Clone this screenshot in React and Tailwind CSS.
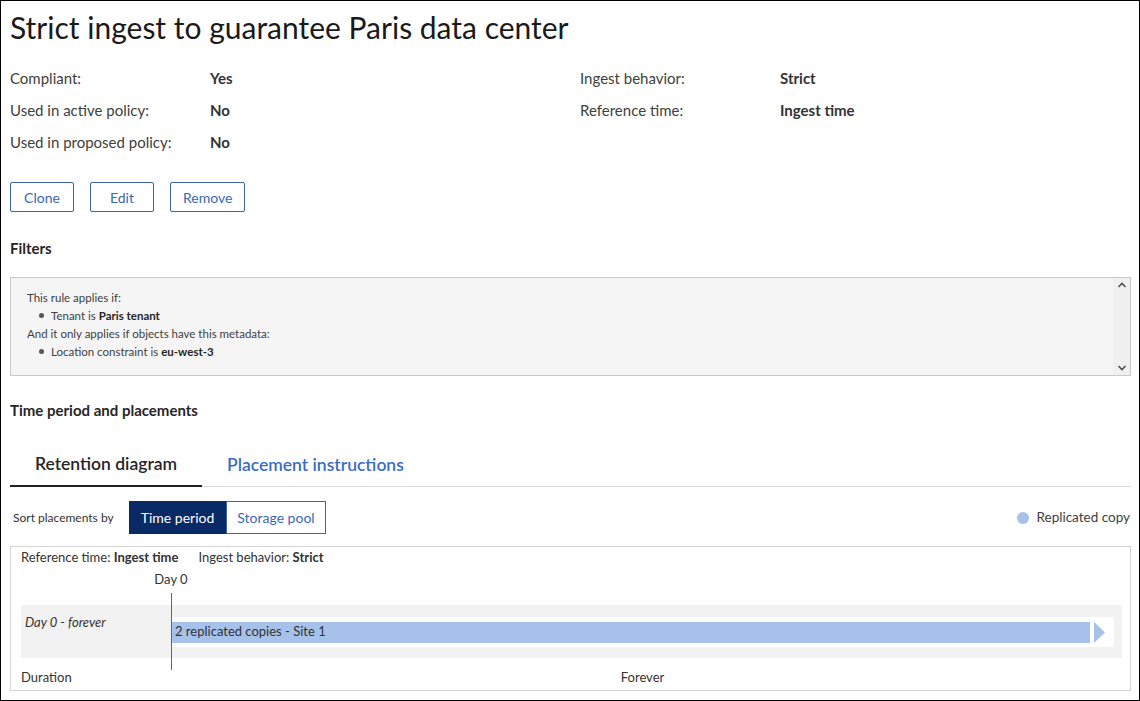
import React from "react";

const font = { fontFamily: "Lato, 'Open Sans', sans-serif" };

function InfoRow({ label, value }) {
  return (
    <div className="flex h-[32px] items-center">
      <div className="w-[200px] text-[15px] text-[#404040]">{label}</div>
      <div className="text-[15px] font-bold text-[#333]">{value}</div>
    </div>
  );
}

export default function App() {
  return (
    <div
      className="w-[1140px] h-[701px] border border-black bg-white text-[#333] overflow-hidden box-border"
      style={font}
    >
      <div className="pl-[9px] pr-[8px]">
        <h1 className="mt-[6px] h-[40px] text-[30px] leading-[40px] text-[#1a1a1a]">
          Strict ingest to guarantee Paris data center
        </h1>
        <div className="mt-[15px] flex">
          <div className="w-[570px]">
            <InfoRow label="Compliant:" value="Yes" />
            <InfoRow label="Used in active policy:" value="No" />
            <InfoRow label="Used in proposed policy:" value="No" />
          </div>
          <div>
            <InfoRow label="Ingest behavior:" value="Strict" />
            <InfoRow label="Reference time:" value="Ingest time" />
          </div>
        </div>
        <div className="mt-[24px] flex gap-[16px]">
          {["Clone", "Edit", "Remove"].map((b) => (
            <button
              key={b}
              className="h-[30px] min-w-[64px] px-[12px] border border-[#3d63a8] rounded-[2px] text-[14px] text-[#3b67b5] bg-white"
            >
              {b}
            </button>
          ))}
        </div>
        <div className="mt-[25px] text-[15px] font-bold text-[#262626]">Filters</div>
        <div className="mt-[17px] h-[99px] border border-[#c8c8c8] bg-[#f5f5f5] flex">
          <div className="flex-1 pl-[16px] pt-[11px] text-[11.5px] leading-[18px] text-[#404040]">
            <div>This rule applies if:</div>
            <div className="flex items-center pl-[12px]">
              <span className="w-[5px] h-[5px] rounded-full bg-[#555] mr-[7px]"></span>
              Tenant is&nbsp;<b className="text-[#262626]">Paris tenant</b>
            </div>
            <div>And it only applies if objects have this metadata:</div>
            <div className="flex items-center pl-[12px]">
              <span className="w-[5px] h-[5px] rounded-full bg-[#555] mr-[7px]"></span>
              Location constraint is&nbsp;<b className="text-[#262626]">eu-west-3</b>
            </div>
          </div>
          <div className="w-[17px] bg-[#f0f0f0] flex flex-col justify-between items-center py-[3px] text-[#555]">
            <svg width="10" height="8" viewBox="0 0 10 8"><path d="M1.5 6 L5 2.5 L8.5 6" fill="none" stroke="#505050" strokeWidth="1.6" /></svg>
            <svg width="10" height="8" viewBox="0 0 10 8"><path d="M1.5 2 L5 5.5 L8.5 2" fill="none" stroke="#505050" strokeWidth="1.6" /></svg>
          </div>
        </div>
        <div className="mt-[23px] text-[15px] font-bold text-[#262626]">Time period and placements</div>
        <div className="mt-[20px] flex border-b border-[#d9d9d9] h-[46px]">
          <div className="w-[192px] border-b-2 border-[#222] -mb-[1px] flex items-center justify-center text-[17.5px] font-semibold text-[#262626] pt-[3px]">
            Retention diagram
          </div>
          <div className="ml-[25px] flex items-center text-[17.5px] font-semibold text-[#3b6cc6] pt-[3px]">
            Placement instructions
          </div>
        </div>
        <div className="mt-[14px] flex items-center">
          <div className="w-[119px] pl-[3px] text-[12px] text-[#333]">Sort placements by</div>
          <div className="flex">
            <div className="h-[33px] w-[97px] bg-[#0a2a66] text-white text-[14px] flex items-center justify-center">Time period</div>
            <div className="h-[33px] w-[100px] border border-[#3d63a8] text-[#3b67b5] text-[14px] flex items-center justify-center">Storage pool</div>
          </div>
          <div className="ml-auto flex items-center pr-[1px]">
            <span className="w-[12px] h-[12px] rounded-full bg-[#a6c1ea] mr-[8px]"></span>
            <span className="text-[13.5px] text-[#404040]">Replicated copy</span>
          </div>
        </div>
        <div className="mt-[12px] h-[145px] border border-[#d4d4d4] pl-[10px] pr-[8px] pt-[2px]">
          <div className="flex text-[13px] h-[17px] items-center">
            <span>Reference time:&nbsp;<b>Ingest time</b></span>
            <span className="ml-[20px]">Ingest behavior:&nbsp;<b>Strict</b></span>
          </div>
          <div className="flex text-[13px] mt-[4px] h-[16px]">
            <div className="w-[150px]"></div>
            <div className="w-0 flex justify-center"><span className="whitespace-nowrap">Day 0</span></div>
          </div>
          <div className="relative mt-[19px]">
            <div className="absolute left-[150px] top-[-12px] h-[77px] w-px bg-[#666]"></div>
            <div className="h-[53px] bg-[#f2f2f2] flex">
              <div className="w-[150px] pl-[4px] pt-[8px] text-[13px] italic">Day 0 - forever</div>
              <div className="flex-1 pr-[8px] pt-[12px]">
                <div className="h-[30px] bg-white flex items-center pl-px">
                  <div className="h-[21px] flex-1 bg-[#a6c1ea] text-[13px] flex items-center pl-[3px]">2 replicated copies - Site 1</div>
                  <svg width="12" height="21" viewBox="0 0 12 21" className="ml-[4px] mr-[8px]">
                    <path d="M0 0 L11 10.5 L0 21 Z" fill="#a6c1ea" />
                  </svg>
                </div>
              </div>
            </div>
            <div className="flex h-[38px] items-center text-[13px] pt-[2px]">
              <div className="w-[150px]">Duration</div>
              <div className="flex-1 text-center pr-[8px]">Forever</div>
            </div>
          </div>
        </div>
      </div>
    </div>
  );
}
